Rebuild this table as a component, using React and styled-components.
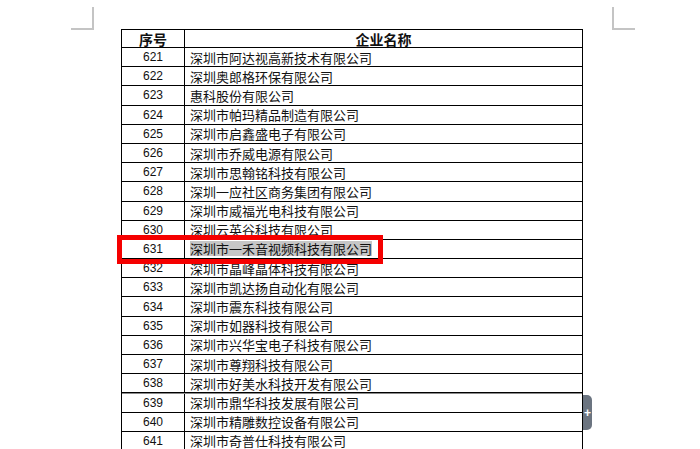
import React from "react";
import styled, { createGlobalStyle } from "styled-components";

const rows = [
  [621, "深圳市阿达视高新技术有限公司"],
  [622, "深圳奥郎格环保有限公司"],
  [623, "惠科股份有限公司"],
  [624, "深圳市帕玛精品制造有限公司"],
  [625, "深圳市启鑫盛电子有限公司"],
  [626, "深圳市乔威电源有限公司"],
  [627, "深圳市思翰铭科技有限公司"],
  [628, "深圳一应社区商务集团有限公司"],
  [629, "深圳市威福光电科技有限公司"],
  [630, "深圳云英谷科技有限公司"],
  [631, "深圳市一禾音视频科技有限公司"],
  [632, "深圳市晶峰晶体科技有限公司"],
  [633, "深圳市凯达扬自动化有限公司"],
  [634, "深圳市震东科技有限公司"],
  [635, "深圳市如器科技有限公司"],
  [636, "深圳市兴华宝电子科技有限公司"],
  [637, "深圳市尊翔科技有限公司"],
  [638, "深圳市好美水科技开发有限公司"],
  [639, "深圳市鼎华科技发展有限公司"],
  [640, "深圳市精雕数控设备有限公司"],
  [641, "深圳市奇普仕科技有限公司"],
];

const GlobalStyle = createGlobalStyle`
  html, body {
    margin: 0;
    padding: 0;
    background: #fff;
  }
`;

const Page = styled.div`
  position: relative;
  width: 700px;
  height: 449px;
  overflow: hidden;
  background: #fff;
  padding: 29px 0 0 121px;
  box-sizing: border-box;
`;

const CropMark = styled.div`
  position: absolute;
  top: 7px;
  left: ${(p) => p.$left}px;
  width: 21px;
  height: 21px;
  border-bottom: 2px solid #c4c4c4;
  ${(p) => (p.$side === "left" ? "border-right" : "border-left")}: 2px solid #c4c4c4;
`;

const Table = styled.div`
  width: 462px;
  border: 1px solid #000;
  border-bottom: none;
  box-sizing: border-box;
`;

const Row = styled.div`
  display: grid;
  grid-template-columns: 63px 1fr;
  height: ${(p) => (p.$head ? 18 : 19.2)}px;
  border-bottom: 1px solid #000;
  box-sizing: border-box;
  ${(p) => p.$thick && "border-top: 1px solid #8a8a8a;"}
`;

const NumCell = styled.div`
  display: flex;
  align-items: center;
  justify-content: center;
  border-right: 1px solid #000;
  font-family: ${(p) =>
    p.$head
      ? `"Noto Sans CJK SC", sans-serif`
      : `"Liberation Sans", Arial, sans-serif`};
  font-size: ${(p) => (p.$head ? 14 : 12)}px;
  font-weight: ${(p) => (p.$head ? 700 : 400)};
  color: #111;
  line-height: 1;
`;

const NameCell = styled.div`
  display: flex;
  align-items: center;
  justify-content: ${(p) => (p.$head ? "center" : "flex-start")};
  padding-left: ${(p) => (p.$head ? 0 : 5)}px;
  font-family: "Noto Sans CJK SC", sans-serif;
  font-size: ${(p) => (p.$head ? 14 : 13)}px;
  font-weight: ${(p) => (p.$head ? 700 : 400)};
  color: #111;
  line-height: 1;
  white-space: nowrap;
`;

const Selected = styled.span`
  background: #c6c6c6;
  padding: 1px 0;
`;

const RedBox = styled.div`
  position: absolute;
  left: 117px;
  top: 235px;
  width: 266px;
  height: 29px;
  border: 5px solid #f50000;
  box-sizing: border-box;
`;

const AddTab = styled.div`
  position: absolute;
  left: 583px;
  top: 395px;
  width: 9px;
  height: 35px;
  background: #6b7480;
  border-radius: 0 5px 5px 0;
  display: flex;
  align-items: center;
  justify-content: center;
  color: #fff;
  font-family: "Liberation Sans", Arial, sans-serif;
  font-weight: 700;
  font-size: 12px;
  line-height: 1;
`;

export default function App() {
  return (
    <>
      <GlobalStyle />
      <Page>
        <CropMark $left={71} $side="left" />
        <CropMark $left={612} $side="right" />
        <Table>
          <Row $head>
            <NumCell $head>序号</NumCell>
            <NameCell $head>企业名称</NameCell>
          </Row>
          {rows.map(([num, name]) => (
            <Row key={num} $thick={num === 639}>
              <NumCell>{num}</NumCell>
              <NameCell>
                {num === 631 ? <Selected>{name}</Selected> : name}
              </NameCell>
            </Row>
          ))}
        </Table>
        <RedBox />
        <AddTab>+</AddTab>
      </Page>
    </>
  );
}
